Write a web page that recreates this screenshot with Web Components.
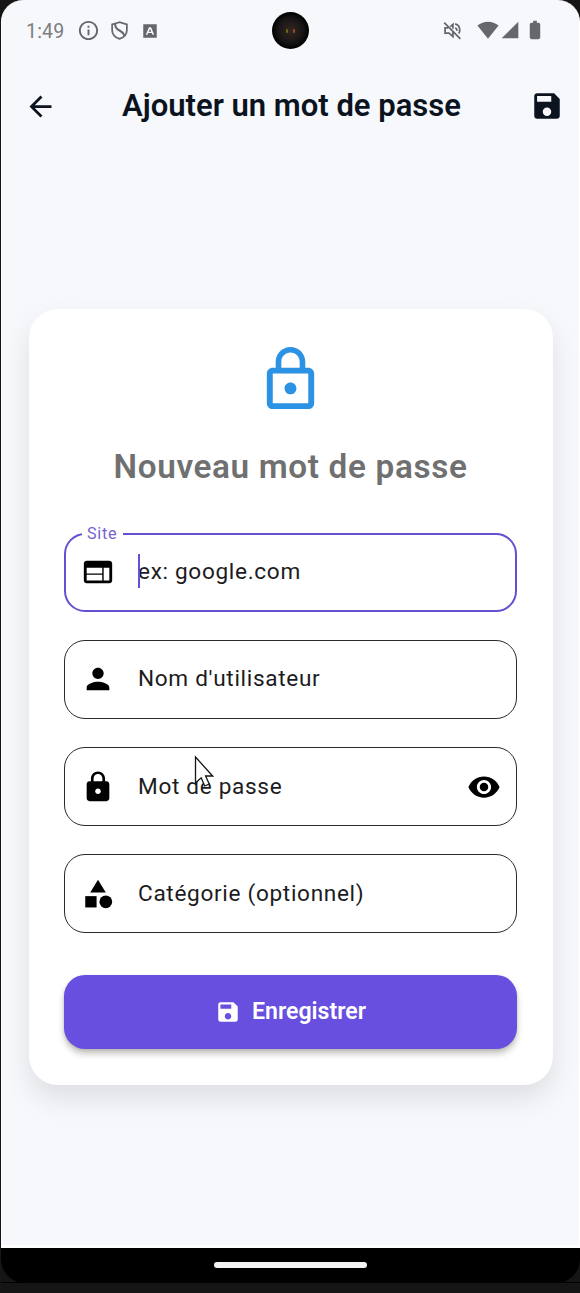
<!DOCTYPE html>
<html lang="fr">
<head>
<meta charset="utf-8">
<title>Ajouter un mot de passe</title>
<style>
html,body{margin:0;height:100%;background:#151515;overflow:hidden}
body{font-family:Roboto,"Liberation Sans",sans-serif}
</style>
</head>
<body>
<phone-shell></phone-shell>
<script>
const ICONS = {
  back: '<path d="M20 11H7.83l5.59-5.59L12 4l-8 8 8 8 1.41-1.41L7.83 13H20z"/>',
  save: '<path d="M17 3H5c-1.11 0-2 .9-2 2v14c0 1.1.89 2 2 2h14c1.1 0 2-.9 2-2V7l-4-4zm-5 16c-1.66 0-3-1.34-3-3s1.34-3 3-3 3 1.34 3 3-1.34 3-3 3zm3-10H5V5h10v4z"/>',
  lockOutline: '<path d="M12 17c1.1 0 2-.9 2-2s-.9-2-2-2-2 .9-2 2 .9 2 2 2zm6-9h-1V6c0-2.76-2.24-5-5-5S7 3.24 7 6v2H6c-1.1 0-2 .9-2 2v10c0 1.1.9 2 2 2h12c1.1 0 2-.9 2-2V10c0-1.1-.9-2-2-2zM8.9 6c0-1.71 1.39-3.1 3.1-3.1s3.1 1.39 3.1 3.1v2H8.9V6zM18 20H6V10h12v10z"/>',
  web: '<path d="M20 4H4c-1.1 0-1.99.9-1.99 2L2 18c0 1.1.9 2 2 2h16c1.1 0 2-.9 2-2V6c0-1.1-.9-2-2-2zm-5 14H4v-4h11v4zm0-5H4V9h11v4zm5 5h-4V9h4v9z"/>',
  person: '<path d="M12 12c2.21 0 4-1.79 4-4s-1.79-4-4-4-4 1.79-4 4 1.79 4 4 4zm0 2c-2.67 0-8 1.34-8 4v2h16v-2c0-2.66-5.33-4-8-4z"/>',
  lock: '<path d="M18 8h-1V6c0-2.76-2.24-5-5-5S7 3.24 7 6v2H6c-1.1 0-2 .9-2 2v10c0 1.1.9 2 2 2h12c1.1 0 2-.9 2-2V10c0-1.1-.9-2-2-2zm-6 9c-1.1 0-2-.9-2-2s.9-2 2-2 2 .9 2 2-.9 2-2 2zm3.1-9H8.9V6c0-1.71 1.39-3.1 3.1-3.1s3.1 1.39 3.1 3.1v2z"/>',
  category: '<path d="M12 2l-5.5 9h11z"/><circle cx="17.5" cy="17.5" r="4.5"/><path d="M3 13.5h8v8H3z"/>',
  eye: '<path d="M12 4.5C7 4.5 2.73 7.61 1 12c1.73 4.39 6 7.5 11 7.5s9.27-3.11 11-7.5c-1.73-4.39-6-7.5-11-7.5zM12 17c-2.76 0-5-2.24-5-5s2.24-5 5-5 5 2.24 5 5-2.24 5-5 5zm0-8c-1.66 0-3 1.34-3 3s1.34 3 3 3 3-1.34 3-3-1.34-3-3-3z"/>',
  info: '<path d="M11 7h2v2h-2zm0 4h2v6h-2zm1-9C6.48 2 2 6.48 2 12s4.48 10 10 10 10-4.48 10-10S17.52 2 12 2zm0 18c-4.41 0-8-3.59-8-8s3.59-8 8-8 8 3.59 8 8-3.59 8-8 8z"/>',
  shield: '<path fill="none" stroke="currentColor" stroke-width="2" d="M12 2.600L3.600 5v6.600c0 4.700 3.600 8.300 8.400 9.900 4.800-1.600 8.400-5.200 8.400-9.900V5z"/><path fill="none" stroke="currentColor" stroke-width="2.300" d="M7 4.500c-.2 3.700 1.600 5.800 5.500 7.800 3.300 1.700 4.600 3.500 5.300 5.700"/>',
  appA: '<path fill-rule="evenodd" d="M3 3h18v18H3zM10.600 7L6.400 17h2.200l.9-2.400h5L15.400 17h2.200L13.400 7zm1.400 2.300l1.700 3.700h-3.400z"/>',
  mute: '<path fill="none" stroke="currentColor" stroke-width="2" d="M2.500 3L21 21.500M7 9H3.500v6H8l4.500 4v-5.500M9.500 7.500L12.500 5v5M15 4.500c3.200.8 5.300 3.500 5.300 7 0 1.500-.4 2.900-1.100 4M15.200 8.800c1.400.7 2 2 1.800 3.600"/>',
  wifi: '<path d="M12 21.500L.5 7.200C3.800 4.400 7.800 3 12 3s8.200 1.400 11.500 4.200z"/>',
  signal: '<path d="M2 22h20V2z"/>',
  battery: '<path d="M15.700 4H14V2h-4v2H8.300C7.100 4 6.300 4.800 6.300 6v14c0 1.200.8 2 2 2h7.400c1.200 0 2-.8 2-2V6c0-1.200-.8-2-2-2z"/>'
};

function define(name, html, setup) {
  customElements.define(name, class extends HTMLElement {
    constructor() {
      super();
      this.attachShadow({mode: 'open'});
    }
    connectedCallback() {
      const t = document.createElement('template');
      t.innerHTML = html;
      this.shadowRoot.replaceChildren(t.content.cloneNode(true));
      if (setup) setup(this, this.shadowRoot);
    }
  });
}

define('md-icon', `<style>
  :host{display:block;flex:none;width:var(--size,34px);height:var(--size,34px)}
  svg{display:block;width:100%;height:100%;fill:currentColor}
</style><svg viewBox="0 0 24 24" aria-hidden="true"></svg>`,
(el, root) => { root.querySelector('svg').innerHTML = ICONS[el.getAttribute('name')]; });

define('status-bar', `<style>
  :host{display:grid;grid-template-columns:1fr 37px 1fr;align-items:center;height:61px;color:#66676a}
  .left,.right{display:flex;align-items:center}
  .left{padding-left:24px}
  time{font-size:19.500px;line-height:24px;letter-spacing:.2px;width:51px;padding-top:2px;color:#7c7d80}
  .right{justify-content:flex-end;padding-right:33px}
  .camera{width:37px;height:37px;border-radius:50%;background:radial-gradient(circle,#342620 0,#1c1818 40%,#101010 55%,#030303 66%);display:flex;align-items:center;justify-content:center;gap:5px}
  i{width:2px;height:4px;border-radius:1px;background:#6b6b16}
  i + i{background:#9c4a32}
</style>
<div class="left"><time>1:49</time>
  <md-icon name="info" style="--size:23px"></md-icon>
  <md-icon name="shield" style="--size:21px;margin-left:9px"></md-icon>
  <md-icon name="appA" style="--size:18px;margin-left:11px"></md-icon></div>
<div class="camera"><i></i><i></i></div>
<div class="right">
  <md-icon name="mute" style="--size:21px;margin-right:14px"></md-icon>
  <md-icon name="wifi" style="--size:22px;margin:-2px 1px 0 0"></md-icon>
  <md-icon name="signal" style="--size:20px;margin:-1px 4px 0 0"></md-icon>
  <md-icon name="battery" style="--size:22px;margin-top:-1px"></md-icon></div>`);

define('app-bar', `<style>
  :host{display:flex;align-items:center;justify-content:space-between;height:90px;padding:0 15px 0 22px;color:#0b131e}
  h1{margin:0 3.500px 0 0;font-size:31px;font-weight:600;line-height:36px;white-space:nowrap}
</style>
<md-icon name="back" style="--size:33px"></md-icon>
<h1><slot></slot></h1>
<md-icon name="save"></md-icon>`);

define('text-field', `<style>
  :host{display:flex;align-items:center;position:relative;box-sizing:border-box;height:79px;padding:0 15.500px;border:1.300px solid #2a2a2a;border-radius:21px;color:#000}
  :host([focused]){border:2.500px solid #6550cf;padding:0 14.500px}
  .value{flex:1;margin-left:23.500px;font-size:22.600px;line-height:34px;letter-spacing:.68px;color:#1c1c1e;white-space:nowrap}
  .label{position:absolute;left:16px;top:-10.500px;padding:0 6px 0 5px;background:#fff;color:#7563d2;font-size:16.200px;line-height:20px;letter-spacing:.7px}
  .caret{position:absolute;left:71.500px;top:19.500px;width:2.500px;height:34px;background:#6550dc}
  [hidden]{display:none}
</style>
<span class="label" hidden></span>
<md-icon class="lead"></md-icon>
<span class="caret" hidden></span>
<span class="value"><slot></slot></span>
<slot name="trailing"></slot>`,
(el, root) => {
  const old = root.querySelector('.lead');
  const icon = document.createElement('md-icon');
  icon.setAttribute('name', el.getAttribute('icon'));
  old.replaceWith(icon);
  if (el.hasAttribute('focused')) {
    const label = root.querySelector('.label');
    label.textContent = el.getAttribute('label');
    label.hidden = false;
    root.querySelector('.caret').hidden = false;
  }
});

define('primary-button', `<style>
  :host{display:flex;align-items:center;justify-content:center;gap:11px;height:74px;border-radius:21px;background:#684fdf;color:#fff;box-shadow:0 5px 6px rgba(40,35,20,.25),0 1px 3px rgba(0,0,0,.12)}
  span{font-size:23.100px;font-weight:600;line-height:30px;white-space:nowrap}
</style>
<md-icon name="save" style="--size:26px"></md-icon><span><slot></slot></span>`);

define('entry-card', `<style>
  :host{display:flex;flex-direction:column;box-sizing:border-box;margin:158px 26px 0 26.500px;height:776px;padding:35px 35.500px 0;border-radius:29px;background:#fff;box-shadow:0 14px 28px rgba(0,0,0,.1)}
  .hero{align-self:center;color:#2b92e4;--size:71px}
  h2{margin:32px 0 0;text-align:center;font-size:33.300px;font-weight:600;line-height:40px;letter-spacing:.65px;color:#707070;white-space:nowrap}
  .fields{display:flex;flex-direction:column;gap:28.200px;margin-top:45.700px}
  primary-button{margin-top:42.200px}
</style>
<md-icon class="hero" name="lockOutline"></md-icon>
<h2>Nouveau mot de passe</h2>
<div class="fields">
  <text-field icon="web" label="Site" focused>ex: google.com</text-field>
  <text-field icon="person">Nom d'utilisateur</text-field>
  <text-field icon="lock">Mot de passe<md-icon slot="trailing" name="eye"></md-icon></text-field>
  <text-field icon="category">Catégorie (optionnel)</text-field>
</div>
<primary-button>Enregistrer</primary-button>`);

define('mouse-pointer', `<style>
  :host{position:absolute;left:194px;top:755px;width:20px;height:34px}
  svg{display:block}
</style><svg width="20" height="34" viewBox="0 0 20 34"><path d="M1.500 2v26l5.700-5.200 3.500 8.200 4.500-2-3.600-8h7z" fill="#fff" stroke="#151515" stroke-width="1.300"/></svg>`);

define('phone-shell', `<style>
  :host{display:flex;flex-direction:column;box-sizing:border-box;width:580px;height:1293px;padding-left:1px;position:relative;background:#151515}
  main{display:flex;flex-direction:column;box-sizing:border-box;width:578.500px;height:1248px;border-radius:22px 22px 0 0;background:#f6f8fc;border:1px solid #fff;border-top:0;border-bottom-width:3px;overflow:hidden}
  nav{display:flex;align-items:center;justify-content:center;height:35px;background:#000;border-radius:0 0 24px 24px}
  nav span{width:153px;height:6px;border-radius:3px;background:#f5f3f4;margin-top:-1px}
  hr{width:100%;height:1px;margin:-1px 0 0;border:0;background:#000}
</style>
<main>
  <status-bar></status-bar>
  <app-bar>Ajouter un mot de passe</app-bar>
  <entry-card></entry-card>
</main>
<nav><span></span></nav><hr>
<mouse-pointer></mouse-pointer>`);
</script>
</body>
</html>
